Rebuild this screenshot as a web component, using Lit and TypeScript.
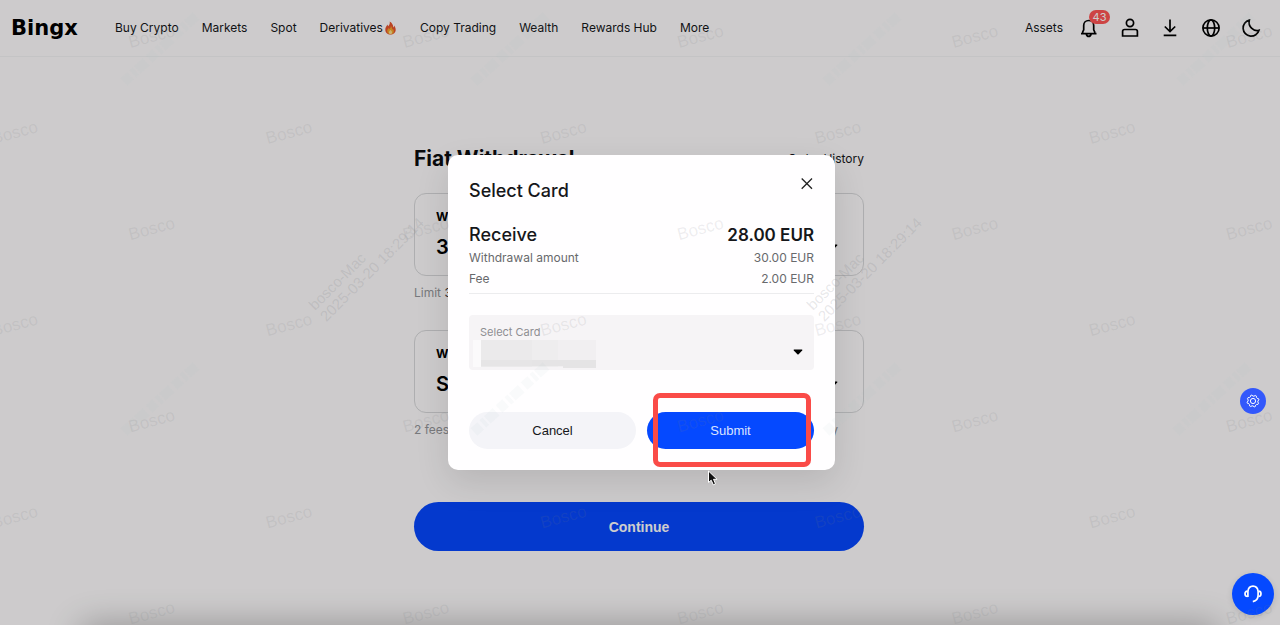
import { LitElement, html, svg, css } from "lit";
import { customElement } from "lit/decorators.js";

const NAV = ["Buy Crypto", "Markets", "Spot", "Derivatives", "Copy Trading", "Wealth", "Rewards Hub", "More"];

const fire = html`<svg class="fire" viewBox="0 0 12 14" aria-hidden="true">
  <path fill="#e8542c" d="M5.2.6c.5 2.300-.4 3.300-1.500 4.700C3.300 4.800 3.200 4.200 3.200 3.600 1.700 5 .8 6.900.8 8.700c0 2.900 2.200 4.900 5.200 4.900s5.200-2 5.200-4.800c0-1.800-.7-3.100-1.500-4.300-.1.900-.4 1.500-.9 1.900C8.700 3.900 7.400 1.700 5.200.6Z"/>
  <path fill="#f6a52c" d="M6.300 5c.2 1.500-.6 2.300-1.300 3-.4-.2-.6-.5-.7-.9-1 .9-1.600 1.800-1.600 3 0 2 1.400 3.100 3.300 3.100s3.300-1.100 3.300-3c0-1.100-.5-1.900-1-2.500-.1.400-.3.800-.6 1C7.700 7.300 7.400 6 6.300 5Z"/>
  <path fill="#fbe08a" d="M6 9c-.9.800-1.600 1.500-1.600 2.400S5 12.900 6 12.900s1.600-.6 1.600-1.500S6.900 9.800 6 9Z"/>
</svg>`;

@customElement("water-mark")
export class WaterMark extends LitElement {
  static styles = css`
    :host { position: absolute; inset: 0; overflow: hidden; pointer-events: none; z-index: 5; }
    svg { display: block; width: 100%; height: 100%; font-family: "Liberation Sans", Arial, sans-serif; }
    .tag { font-size: 17px; fill: rgba(120, 125, 130, 0.13); }
    .stamp { font-size: 15px; fill: rgba(120, 125, 130, 0.18); }
    .smudge { fill: none; stroke: rgba(175, 200, 200, 0.07); stroke-width: 10; stroke-dasharray: 9 3 4 2 12 4; }
  `;
  render() {
    const tags: [number, number][] = [];
    for (let row = 0; row < 7; row++) {
      for (let col = 0; col < 5; col++) {
        tags.push([(row % 2 ? 15 : 152) + col * 274.4, 38 + row * 96.1]);
      }
    }
    const stamps: [number, number][] = [[315, 311], [813, 311]];
    const smudges: [number, number][] = [[124, 82], [474, 82], [826, 82], [1180, 82], [124, 432], [474, 432], [826, 432], [1176, 432]];
    return html`<svg aria-hidden="true">
      ${smudges.map(([x, y]) => svg`<path class="smudge" d=${`M${x} ${y}l72-66`}></path>`)}
      ${tags.map(([x, y]) => svg`<text class="tag" text-anchor="middle" transform=${`translate(${x} ${y}) rotate(-15)`} y="4">Bosco</text>`)}
      ${stamps.map(([x, y]) => svg`<g class="stamp" transform=${`translate(${x} ${y}) rotate(-45)`}>
        <text>bosco-Mac</text><text x="0" y="16">2025-03-20 18:29:14</text></g>`)}
    </svg>`;
  }
}

@customElement("app-root")
export class AppRoot extends LitElement {
  static styles = css`
    :host {
      display: block; position: relative; min-height: 100vh; overflow: hidden;
      background: #fffdfe; color: #16171a; font-family: Inter, "Liberation Sans", sans-serif;
      font-size: 12px; line-height: 18px;
    }
    * { box-sizing: border-box; }
    h1, h2, p, dl, dd, dt { margin: 0; font-weight: inherit; }
    a { color: inherit; text-decoration: none; }
    button { border: 0; padding: 0; background: none; color: inherit; font: inherit; cursor: pointer; }
    svg { display: block; }
    header { display: flex; align-items: center; height: 57px; padding: 0 19px 0 11px; border-bottom: 1px solid #f4f4f5; }
    .logo { width: 104px; font: 700 21px/28px "DejaVu Sans", sans-serif; color: #000; }
    nav { display: flex; gap: 23px; flex: 1; }
    nav a { display: flex; align-items: center; white-space: nowrap; }
    .fire { width: 13px; height: 14px; margin-left: 1px; }
    .tools { display: flex; justify-content: space-between; width: 182px; margin-left: 16px; color: #000; }
    .tool { position: relative; width: 20px; height: 20px; }
    .tool svg { width: 20px; height: 20px; fill: none; stroke: currentColor; stroke-width: 1.7; }
    .badge { position: absolute; left: 10px; top: -8px; width: 21px; height: 14px; border-radius: 7px; background: #ff5555; color: #fff; font-size: 11px; line-height: 14px; text-align: center; }
    main { max-width: 452px; margin: 0 auto; padding: 87px 2px 74px 0; }
    .head { display: flex; align-items: center; justify-content: space-between; margin-bottom: 19px; }
    h1 { font-size: 21px; line-height: 30px; font-weight: 700; color: #0c0d10; }
    .field { position: relative; display: flex; align-items: flex-end; justify-content: space-between; height: 83px; padding: 14px 25px 14px 21px; border: 1px solid #d9d9db; border-radius: 12px; color: #000; }
    .field dt { font-size: 12px; line-height: 18px; font-weight: 700; }
    .field dd { font-size: 20px; line-height: 28px; margin-top: 7px; font-weight: 600; }
    .caret { width: 10px; height: 6px; fill: #000; }
    .field .caret { margin-bottom: 11px; }
    .hint { display: flex; justify-content: space-between; padding: 8px 26px 28px 0; color: #96979b; }
    .hint b { font-weight: 400; color: #303136; }
    .continue { width: 100%; height: 49px; margin-top: 35px; border-radius: 25px; background: #0647ff; color: #fff; font: 700 14px/20px "Liberation Sans", Arial, sans-serif; }
    .backdrop { position: absolute; inset: 0; display: flex; justify-content: center; align-items: flex-start; padding: 155px 0 0 3px; background: rgba(0, 0, 0, 0.195); z-index: 2; }
    .dialog { width: 387px; padding: 21px; border-radius: 10px; background: #fffeff; box-shadow: 0 12px 34px rgba(0, 0, 0, 0.11); }
    .top { display: flex; justify-content: space-between; margin-bottom: 18px; }
    h2 { font-size: 18px; line-height: 30px; font-weight: 500; }
    .close { width: 14px; height: 15px; }
    .close svg { width: 14px; height: 15px; stroke: #222; stroke-width: 1.3; fill: none; }
    .row { display: flex; justify-content: space-between; line-height: 21px; color: #68696c; }
    .row.total { font-size: 18px; font-weight: 500; line-height: 24px; color: #16171a; }
    .total dd { font-size: 17px; font-weight: 600; }
    .amounts { margin-top: -1px; padding-bottom: 4px; border-bottom: 1px solid #ececee; }
    .picker { position: relative; height: 55px; margin-top: 21px; padding: 8px 11px; border-radius: 4px; background: #f6f4f6; }
    .picker label { display: block; font-size: 11px; line-height: 18px; color: #8e8e92; }
    .picker select { position: absolute; inset: 0; width: 100%; height: 100%; border: 0; background: none; appearance: none; }
    .picker .caret { position: absolute; right: 11px; bottom: 15px; pointer-events: none; }
    .mosaic { position: absolute; left: 4px; top: 25px; width: 124px; height: 28px; pointer-events: none; }
    .actions { display: grid; grid-template-columns: 1fr 1fr; gap: 11px; margin-top: 42px; }
    .actions button { position: relative; height: 37px; border-radius: 19px; background: #f4f4f8; font-size: 13px; font-family: "Liberation Sans", Arial, sans-serif; }
    .actions .submit { background: #0549ff; color: #dbe4ff; }
    .mark { position: absolute; inset: -19px 3px -18px 6px; border: 5px solid #fa4b48; border-radius: 7px; }
    .cursor { position: absolute; left: 60px; top: 58px; width: 12px; height: 16px; }
    .dock { position: absolute; left: 80px; right: 60px; bottom: -30px; height: 30px; border-radius: 10px; box-shadow: 0 0 34px rgba(0, 0, 0, 0.3); z-index: 1; }
    .float { position: absolute; right: 6px; bottom: 10px; display: flex; flex-direction: column; align-items: center; gap: 159px; z-index: 3; }
    .gear, .chat { display: grid; place-items: center; border-radius: 50%; background: #3358fb; width: 26px; height: 26px; }
    .chat { width: 42px; height: 42px; background: #0549ff; box-shadow: 0 2px 6px rgba(0, 0, 0, 0.12); }
    .float svg { fill: none; stroke: #fff; }
  `;

  private caret = () => html`<svg class="caret" viewBox="0 0 10 6" aria-hidden="true"><path d="M1.200.5h7.600q1 .2.400 1L5.600 5.200q-.6.500-1.200 0L.8 1.500Q.2.700 1.200.5Z"/></svg>`;

  render() {
    const gear = Array.from({ length: 33 }, (_, i) => {
      const a = (i / 32) * Math.PI * 2 - Math.PI / 8;
      const r = i % 4 < 2 ? 6 : 4.9;
      return `${i ? "L" : "M"}${(7 + r * Math.cos(a)).toFixed(2)} ${(7 + r * Math.sin(a)).toFixed(2)}`;
    }).join("");
    return html`
      <header>
        <a class="logo" href="#">Bingx</a>
        <nav>${NAV.map((n) => html`<a href="#">${n}${n === "Derivatives" ? fire : ""}</a>`)}</nav>
        <a href="#">Assets</a>
        <div class="tools">
          <button class="tool" aria-label="Notifications">
            <svg viewBox="0 0 20 20"><path d="M2 15.600h15.500M3.700 15.500V14l1-2.200V7.500C4.700 4.500 6.900 2.500 9.700 2.500s5 2 5 5v4.300l1 2.200v1.500M7.300 16c.3 1.600 1.200 2.400 2.400 2.400s2.100-.8 2.400-2.400"/></svg>
            <span class="badge">43</span>
          </button>
          <button class="tool" aria-label="Account">
            <svg viewBox="0 0 20 20"><circle cx="10" cy="5" r="3.600"/><path d="M2.600 18v-4.500q0-2 2-2h10.800q2 0 2 2V18Z"/></svg>
          </button>
          <button class="tool" aria-label="Download">
            <svg viewBox="0 0 20 20"><path d="M10 1.500v12M4.800 8.500l5.200 5 5.200-5M3.700 17.400h12.600"/></svg>
          </button>
          <button class="tool" aria-label="Language">
            <svg viewBox="0 0 20 20"><circle cx="10" cy="10" r="8.100"/><ellipse cx="10" cy="10" rx="3.700" ry="8.100"/><path d="M2 10h16"/></svg>
          </button>
          <button class="tool" aria-label="Dark mode">
            <svg viewBox="0 0 20 20"><path d="M8.300 2.200A8.100 8.100 0 1 0 18 12.300C12.500 13.700 6.800 8.500 8.300 2.200Z"/></svg>
          </button>
        </div>
      </header>
      <main>
        <div class="head"><h1>Fiat Withdrawal</h1><a href="#">Order History</a></div>
        <div class="field"><dl><dt>Withdraw</dt><dd>30</dd></dl>${this.caret()}</div>
        <p class="hint"><span>Limit <b>30</b></span></p>
        <div class="field"><dl><dt>Withdraw</dt><dd>SEPA</dd></dl>${this.caret()}</div>
        <p class="hint"><span>2 fees</span><span>daily</span></p>
        <button class="continue">Continue</button>
      </main>
      <div class="dock"></div>
      <div class="backdrop">
        <section class="dialog" role="dialog" aria-labelledby="title">
          <div class="top">
            <h2 id="title">Select Card</h2>
            <button class="close" aria-label="Close"><svg viewBox="0 0 14 15"><path d="M1.700 2.500l10.300 10.300M12 2.500L1.700 12.800"/></svg></button>
          </div>
          <dl class="amounts">
            <div class="row total"><dt>Receive</dt><dd>28.00 EUR</dd></div>
            <div class="row"><dt>Withdrawal amount</dt><dd>30.00 EUR</dd></div>
            <div class="row"><dt>Fee</dt><dd>2.00 EUR</dd></div>
          </dl>
          <div class="picker">
            <label for="card">Select Card</label>
            <select id="card"><option></option></select>
            <svg class="mosaic" viewBox="0 0 124 28" shape-rendering="crispEdges" aria-hidden="true">
              <path fill="#fbfafb" d="M0 0h8v27H0z"/><path fill="#ebeaeb" d="M8 0h51v27H8z"/>
              <path fill="#eeedee" d="M59 0h26v27H59z"/><path fill="#f1eff1" d="M85 0h38v27H85z"/>
              <path fill="#e6e5e6" d="M8 20h77v6H8z"/><path fill="#e5e4e5" d="M59 20h64v6H59zM90 26h33v2H90z"/>
            </svg>
            ${this.caret()}
          </div>
          <div class="actions">
            <button>Cancel</button>
            <button class="submit">Submit
              <span class="mark"></span>
              <svg class="cursor" viewBox="0 0 12 16" aria-hidden="true"><path fill="#111" stroke="#fff" stroke-width="1" d="M1.500 1v11.500l2.700-2.300 2.100 4.600 2.200-1-2-4.500h3.600Z"/></svg>
            </button>
          </div>
        </section>
      </div>
      <div class="float">
        <button class="gear" aria-label="Settings"><svg width="14" height="14" viewBox="0 0 14 14"><path d=${gear}></path><circle cx="7" cy="7" r="2.600"></circle></svg></button>
        <button class="chat" aria-label="Support"><svg width="20" height="20" viewBox="0 0 20 20" stroke-width="1.700"><path d="M4.900 13V7.500C5.200 4.200 7.300 2.200 10 2.200s4.800 2 5.100 5.300v3.800c0 3.400-1.800 5.700-5.300 6.300"/><path d="M4.500 7.200C2.600 7.200 2 8.300 2 9.800s.7 2.700 2.600 2.700M15.500 7.200c1.900 0 2.500 1.100 2.500 2.600s-.7 2.700-2.600 2.700"/></svg></button>
      </div>
      <water-mark></water-mark>
    `;
  }
}
